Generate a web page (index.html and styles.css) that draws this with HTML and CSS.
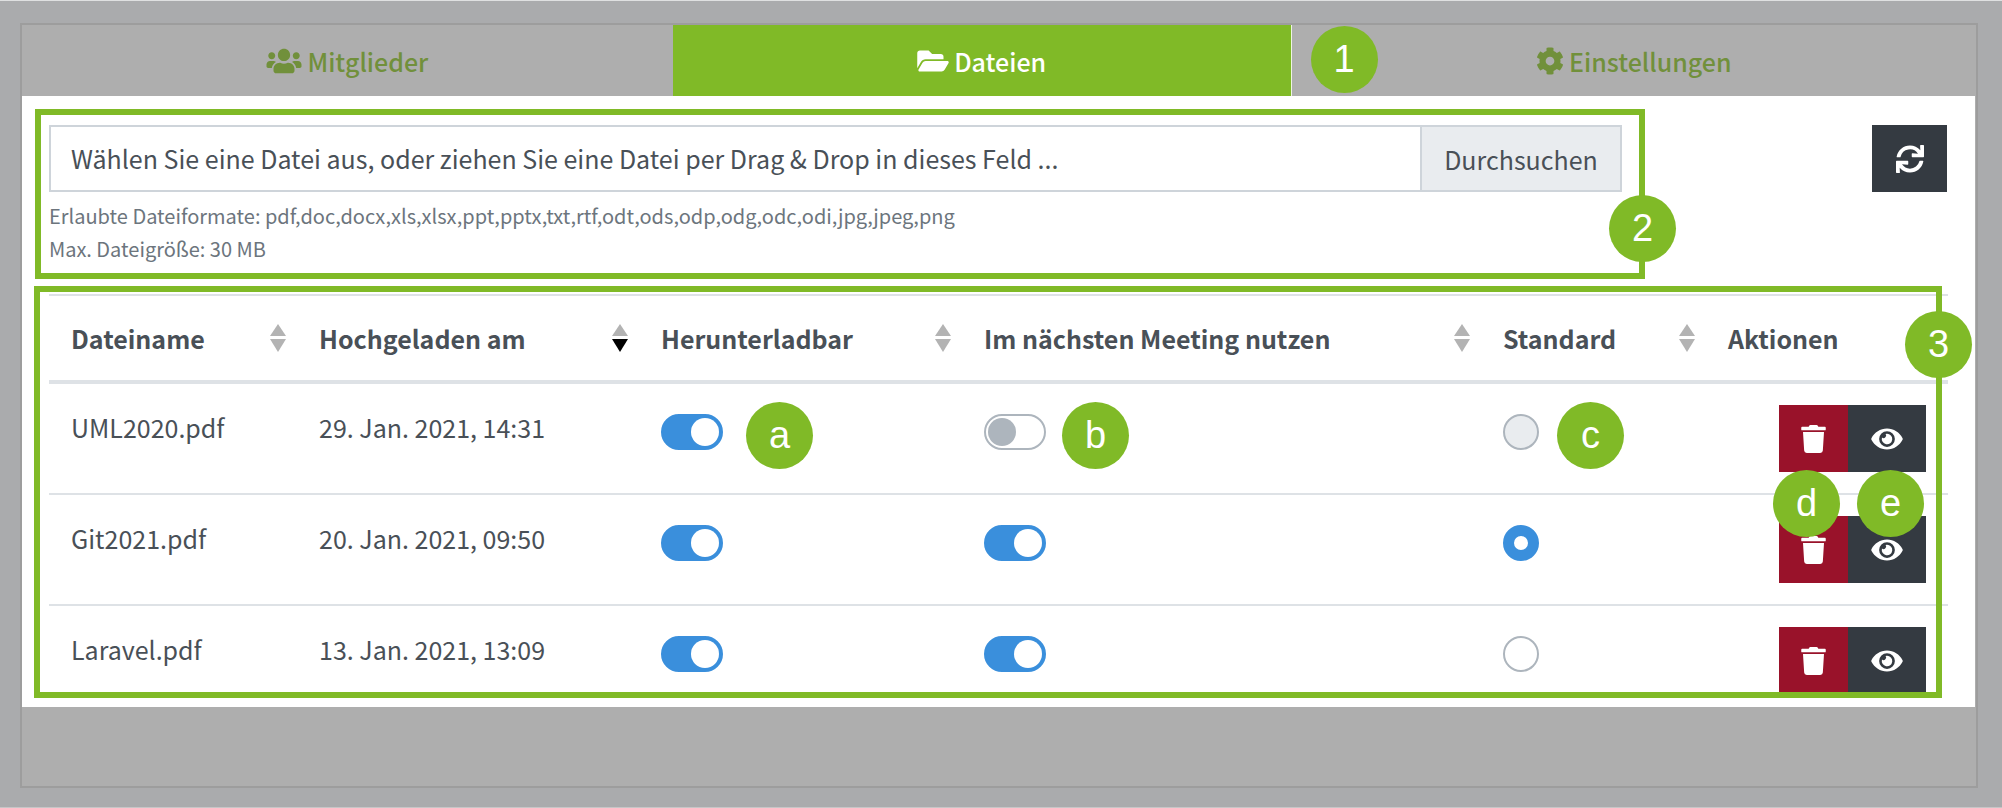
FILE: index.html
```html
<!DOCTYPE html>
<html lang="de">
<head>
<meta charset="utf-8">
<meta name="viewport" content="width=device-width, initial-scale=1">
<title>Dateien</title>
<link rel="stylesheet" href="styles.css">
</head>
<body>
<svg class="sprite" aria-hidden="true">
  <symbol id="users" viewBox="0 0 640 512"><path d="M96 224c35.3 0 64-28.7 64-64s-28.7-64-64-64-64 28.7-64 64 28.7 64 64 64zm448 0c35.3 0 64-28.7 64-64s-28.7-64-64-64-64 28.7-64 64 28.7 64 64 64zm32 32h-64c-17.6 0-33.5 7.1-45.1 18.6 40.3 22.1 68.9 62 75.1 109.4h66c17.7 0 32-14.3 32-32v-32c0-35.3-28.7-64-64-64zm-256 0c61.9 0 112-50.1 112-112S381.9 32 320 32 208 82.1 208 144s50.1 112 112 112zm76.8 32h-8.3c-20.8 10-43.9 16-68.5 16s-47.6-6-68.5-16h-8.3C179.6 288 128 339.6 128 403.2V432c0 26.5 21.5 48 48 48h288c26.5 0 48-21.5 48-48v-28.8c0-63.6-51.6-115.2-115.2-115.2zm-223.7-13.4C161.5 263.1 145.6 256 128 256H64c-35.3 0-64 28.7-64 64v32c0 17.7 14.3 32 32 32h65.9c6.3-47.4 34.9-87.3 75.2-109.4z"/></symbol>
  <symbol id="folder" viewBox="0 0 576 512"><path d="M572.694 292.093L500.27 416.248A63.997 63.997 0 0 1 444.989 448H45.025c-18.523 0-30.064-20.093-20.731-36.093l72.424-124.155A64 64 0 0 1 152 256h399.964c18.523 0 30.064 20.093 20.73 36.093zM152 224h328v-48c0-26.51-21.49-48-48-48H272l-64-64H48C21.49 64 0 85.49 0 112v278.046l69.077-118.418C86.214 242.25 117.989 224 152 224z"/></symbol>
  <symbol id="cog" viewBox="0 0 512 512"><path d="M487.4 315.7l-42.6-24.6c4.3-23.2 4.3-47 0-70.2l42.6-24.6c4.9-2.8 7.1-8.6 5.5-14-11.1-35.6-30-67.8-54.7-94.6-3.8-4.1-10-5.1-14.8-2.3L380.8 110c-17.9-15.4-38.5-27.3-60.8-35.1V25.8c0-5.6-3.9-10.5-9.4-11.7-36.7-8.2-74.3-7.8-109.2 0-5.5 1.2-9.4 6.1-9.4 11.7V75c-22.2 7.9-42.8 19.8-60.8 35.1L88.7 85.5c-4.9-2.8-11-1.9-14.8 2.3-24.7 26.7-43.6 58.9-54.7 94.6-1.7 5.4.6 11.2 5.5 14L67.3 221c-4.3 23.2-4.3 47 0 70.2l-42.6 24.6c-4.9 2.8-7.1 8.6-5.5 14 11.1 35.6 30 67.8 54.7 94.6 3.8 4.1 10 5.1 14.8 2.3l42.6-24.6c17.9 15.4 38.5 27.3 60.8 35.1v49.2c0 5.6 3.9 10.5 9.4 11.7 36.7 8.2 74.3 7.8 109.2 0 5.5-1.2 9.4-6.1 9.4-11.7v-49.2c22.2-7.9 42.8-19.8 60.8-35.1l42.6 24.6c4.9 2.8 11 1.9 14.8-2.3 24.7-26.7 43.6-58.9 54.7-94.6 1.5-5.5-.7-11.3-5.6-14.1zM256 336c-44.1 0-80-35.9-80-80s35.9-80 80-80 80 35.9 80 80-35.9 80-80 80z"/></symbol>
  <symbol id="sync" viewBox="0 0 512 512"><path d="M440.65 12.57l4 82.77A247.16 247.16 0 0 0 255.83 8C134.73 8 33.91 94.92 12.29 209.82A12 12 0 0 0 24.09 224h49.05a12 12 0 0 0 11.67-9.26 175.91 175.91 0 0 1 317-56.94l-101.46-4.86a12 12 0 0 0-12.57 12v47.41a12 12 0 0 0 12 12H500a12 12 0 0 0 12-12V12a12 12 0 0 0-12-12h-47.37a12 12 0 0 0-11.98 12.57zM255.83 432a175.61 175.61 0 0 1-146-77.8l101.8 4.87a12 12 0 0 0 12.57-12v-47.4a12 12 0 0 0-12-12H12a12 12 0 0 0-12 12V500a12 12 0 0 0 12 12h47.35a12 12 0 0 0 12-12.6l-4.15-82.57A247.17 247.17 0 0 0 255.83 504c121.11 0 221.93-86.92 243.55-201.82a12 12 0 0 0-11.8-14.18h-49.05a12 12 0 0 0-11.67 9.26A175.86 175.86 0 0 1 255.83 432z"/></symbol>
  <symbol id="trash" viewBox="0 0 448 512"><path d="M432 32H312l-9.4-18.7A24 24 0 0 0 281.1 0H166.8a23.72 23.72 0 0 0-21.4 13.3L136 32H16A16 16 0 0 0 0 48v32a16 16 0 0 0 16 16h416a16 16 0 0 0 16-16V48a16 16 0 0 0-16-16zM53.2 467a48 48 0 0 0 47.9 45h245.8a48 48 0 0 0 47.9-45L416 128H32z"/></symbol>
  <symbol id="eye" viewBox="0 0 576 512"><path d="M572.52 241.4C518.29 135.59 410.93 64 288 64S57.68 135.64 3.48 241.41a32.35 32.35 0 0 0 0 29.19C57.71 376.41 165.07 448 288 448s230.32-71.64 284.52-177.41a32.35 32.35 0 0 0 0-29.19zM288 400a144 144 0 1 1 144-144 143.93 143.93 0 0 1-144 144zm0-240a95.31 95.31 0 0 0-25.31 3.79 47.85 47.85 0 0 1-66.9 66.9A95.78 95.78 0 1 0 288 160z"/></symbol>
  <symbol id="sort" viewBox="0 0 20 28"><path class="sort-up" d="M10 0 18 12H2z"/><path class="sort-down" d="M10 28 2 15H18z"/></symbol>
</svg>

<main class="card">
  <nav class="tabs">
    <a class="tab" href="#mitglieder"><svg class="icon icon-xl"><use href="#users"/></svg>Mitglieder</a>
    <a class="tab tab-active" href="#dateien" aria-current="page"><svg class="icon icon-lg"><use href="#folder"/></svg>Dateien</a>
    <a class="tab" href="#einstellungen"><svg class="icon"><use href="#cog"/></svg>Einstellungen<span class="badge badge-tab">1</span></a>
  </nav>

  <div class="panel">
    <div class="toolbar">
      <section class="upload">
        <div class="file">
          <input class="file-input" type="file" id="file">
          <label class="file-label" for="file">Wählen Sie eine Datei aus, oder ziehen Sie eine Datei per Drag &amp; Drop in dieses Feld ...</label>
          <button class="file-button" type="button">Durchsuchen</button>
        </div>
        <p class="hint">Erlaubte Dateiformate: pdf,doc,docx,xls,xlsx,ppt,pptx,txt,rtf,odt,ods,odp,odg,odc,odi,jpg,jpeg,png</p>
        <p class="hint">Max. Dateigröße: 30 MB</p>
        <span class="badge badge-upload">2</span>
      </section>
      <button class="btn btn-reload" type="button" aria-label="Neu laden"><svg class="icon"><use href="#sync"/></svg></button>
    </div>

    <section class="files">
      <table class="table">
        <colgroup><col class="c-name"><col class="c-date"><col class="c-download"><col><col class="c-default"><col class="c-actions"></colgroup>
        <thead>
          <tr>
            <th scope="col"><button class="sort" type="button">Dateiname<svg class="sort-icon"><use href="#sort"/></svg></button></th>
            <th scope="col" aria-sort="descending"><button class="sort sort-desc" type="button">Hochgeladen am<svg class="sort-icon"><use href="#sort"/></svg></button></th>
            <th scope="col"><button class="sort" type="button">Herunterladbar<svg class="sort-icon"><use href="#sort"/></svg></button></th>
            <th scope="col"><button class="sort" type="button">Im nächsten Meeting nutzen<svg class="sort-icon"><use href="#sort"/></svg></button></th>
            <th scope="col"><button class="sort" type="button">Standard<svg class="sort-icon"><use href="#sort"/></svg></button></th>
            <th scope="col">Aktionen</th>
          </tr>
        </thead>
        <tbody>
          <tr>
            <td>UML2020.pdf</td>
            <td>29. Jan. 2021, 14:31</td>
            <td><div class="control"><input class="switch" type="checkbox" checked aria-label="UML2020.pdf herunterladbar"><span class="badge badge-download">a</span></div></td>
            <td><div class="control"><input class="switch" type="checkbox" aria-label="UML2020.pdf im nächsten Meeting nutzen"><span class="badge badge-meeting">b</span></div></td>
            <td><div class="control"><input class="radio" type="radio" name="default" disabled aria-label="UML2020.pdf als Standard"><span class="badge badge-default">c</span></div></td>
            <td><div class="actions"><button class="btn btn-delete" type="button" aria-label="Löschen"><svg class="icon icon-sm"><use href="#trash"/></svg></button><button class="btn btn-view" type="button" aria-label="Ansehen"><svg class="icon icon-lg"><use href="#eye"/></svg></button><span class="badge badge-delete">d</span><span class="badge badge-view">e</span></div></td>
          </tr>
          <tr>
            <td>Git2021.pdf</td>
            <td>20. Jan. 2021, 09:50</td>
            <td><div class="control"><input class="switch" type="checkbox" checked aria-label="Git2021.pdf herunterladbar"></div></td>
            <td><div class="control"><input class="switch" type="checkbox" checked aria-label="Git2021.pdf im nächsten Meeting nutzen"></div></td>
            <td><div class="control"><input class="radio" type="radio" name="default" checked aria-label="Git2021.pdf als Standard"></div></td>
            <td><div class="actions"><button class="btn btn-delete" type="button" aria-label="Löschen"><svg class="icon icon-sm"><use href="#trash"/></svg></button><button class="btn btn-view" type="button" aria-label="Ansehen"><svg class="icon icon-lg"><use href="#eye"/></svg></button></div></td>
          </tr>
          <tr>
            <td>Laravel.pdf</td>
            <td>13. Jan. 2021, 13:09</td>
            <td><div class="control"><input class="switch" type="checkbox" checked aria-label="Laravel.pdf herunterladbar"></div></td>
            <td><div class="control"><input class="switch" type="checkbox" checked aria-label="Laravel.pdf im nächsten Meeting nutzen"></div></td>
            <td><div class="control"><input class="radio" type="radio" name="default" aria-label="Laravel.pdf als Standard"></div></td>
            <td><div class="actions"><button class="btn btn-delete" type="button" aria-label="Löschen"><svg class="icon icon-sm"><use href="#trash"/></svg></button><button class="btn btn-view" type="button" aria-label="Ansehen"><svg class="icon icon-lg"><use href="#eye"/></svg></button></div></td>
          </tr>
        </tbody>
      </table>
      <div class="files-frame"></div>
      <span class="badge badge-files">3</span>
    </section>
  </div>
</main>
</body>
</html>
```

FILE: styles.css
```css
:root {
  --green: #80ba27;
  --blue: #3a8fdc;
  --dark: #343a41;
  --red: #99122a;
  --text: #495057;
  --line: #dee2e6;
}

*, *::before, *::after { box-sizing: border-box; }

body {
  margin: 0;
  min-height: 100vh;
  display: flex;
  padding: 22px 24px 19px 20px;
  border-top: 1px solid #dfe0e1;
  border-bottom: 1px solid #c6c6c7;
  background: #aaabad;
  color: var(--text);
  font-family: "Noto Sans CJK SC", "Noto Sans CJK JP", "Noto Sans", sans-serif;
  font-size: 25px;
  line-height: 44px;
}

button { font: inherit; color: inherit; border: 0; padding: 0; cursor: pointer; }

.sprite { position: absolute; width: 0; height: 0; }

.card {
  flex: 1;
  min-width: 0;
  border: 2px solid #9d9d9d;
  background: #aeaeae;
}

.icon { width: 28px; height: 28px; fill: currentColor; flex: none; }
.icon-xl { width: 36px; }
.icon-lg { width: 32px; }
.icon-sm { width: 25px; }

/* Tabs */
.tabs { display: flex; height: 71px; }
.tab {
  position: relative;
  flex: 1 1 auto;
  display: flex;
  align-items: center;
  justify-content: center;
  gap: 5px;
  color: #71903b;
  font-weight: 500;
  text-decoration: none;
}
.tab-active {
  background: var(--green);
  color: #fff;
  border-right: 1px solid #eef5e2;
}

/* Panel */
.panel {
  padding: 13px 0 1px 13px;
  margin-right: 1px;
  background: #fff;
}
.toolbar {
  display: flex;
  align-items: flex-start;
  justify-content: space-between;
  padding-right: 28px;
}
.upload {
  position: relative;
  flex: 0 1 1610px;
  border: 6px solid var(--green);
  padding: 10px 17px 8px 8px;
}
.file {
  display: flex;
  height: 67px;
  margin-bottom: 7px;
  border: 2px solid #ced4da;
}
.file-input { position: absolute; width: 1px; height: 1px; opacity: 0; }
.file-label { flex: 1; padding: 9px 20px; }
.file-button {
  width: 200px;
  background: #e9ecef;
  border-left: 2px solid #ced4da;
}
.hint { margin: 0; font-size: 20px; line-height: 33px; color: #6c757d; }

.btn {
  display: flex;
  align-items: center;
  justify-content: center;
  height: 67px;
  color: #fff;
  background: var(--dark);
}
.btn-reload { width: 75px; margin-top: 16px; }
.btn-delete { width: 69px; background: var(--red); }
.btn-view { width: 78px; }

/* Table */
.files { position: relative; padding: 15px 27px 0 14px; }
.files-frame {
  position: absolute;
  inset: 7px 33px 8px -1px;
  border: 6px solid var(--green);
  pointer-events: none;
}
.table { width: 100%; border-collapse: separate; border-spacing: 0; table-layout: fixed; }
.c-name { width: 248px; }
.c-date { width: 342px; }
.c-download { width: 323px; }
.c-default { width: 225px; }
.c-actions { width: 242px; }

th, td { text-align: left; vertical-align: top; border-top: 2px solid var(--line); }
th { padding: 20px 9px 20px 22px; border-bottom: 2px solid var(--line); font-weight: 700; }
td { padding: 21px 22px; white-space: nowrap; }
tbody tr:last-child td { padding-bottom: 12px; }

.sort {
  display: flex;
  align-items: center;
  justify-content: space-between;
  width: 100%;
  background: none;
  text-align: left;
}
.sort-icon { width: 20px; height: 28px; flex: none; fill: #b3b3b3; --down: #b3b3b3; }
.sort-desc .sort-icon { --down: #000; }
.sort-down { fill: var(--down); }

.control { position: relative; display: flex; padding-top: 9px; }
.switch, .radio {
  appearance: none;
  margin: 0;
  height: 36px;
  border: 2px solid #adb5bd;
  border-radius: 18px;
  background: #fff;
}
.switch { width: 62px; padding: 2px; }
.switch::before {
  content: "";
  display: block;
  width: 28px;
  height: 28px;
  border-radius: 50%;
  background: #adb5bd;
}
.switch:checked { background: var(--blue); border-color: var(--blue); }
.switch:checked::before { margin-left: auto; background: #fff; }
.radio { width: 36px; }
.radio:disabled { background: #e9ecef; }
.radio:checked { border: 11px solid var(--blue); }

.actions { position: relative; display: flex; justify-content: flex-end; }

/* Numbered markers */
.badge {
  position: absolute;
  z-index: 1;
  width: 67px;
  height: 67px;
  border-radius: 50%;
  background: var(--green);
  color: #fff;
  font: 400 38px/67px "Liberation Sans", Arial, sans-serif;
  text-align: center;
}
.badge-tab { left: 19px; top: 1px; }
.badge-upload { right: -37px; top: 80px; }
.badge-files { right: 3px; top: 32px; }
.badge-download { left: 85px; top: -3px; }
.badge-meeting { left: 78px; top: -3px; }
.badge-default { left: 54px; top: -3px; }
.badge-delete { right: 86px; top: 65px; }
.badge-view { right: 2px; top: 65px; }
```
